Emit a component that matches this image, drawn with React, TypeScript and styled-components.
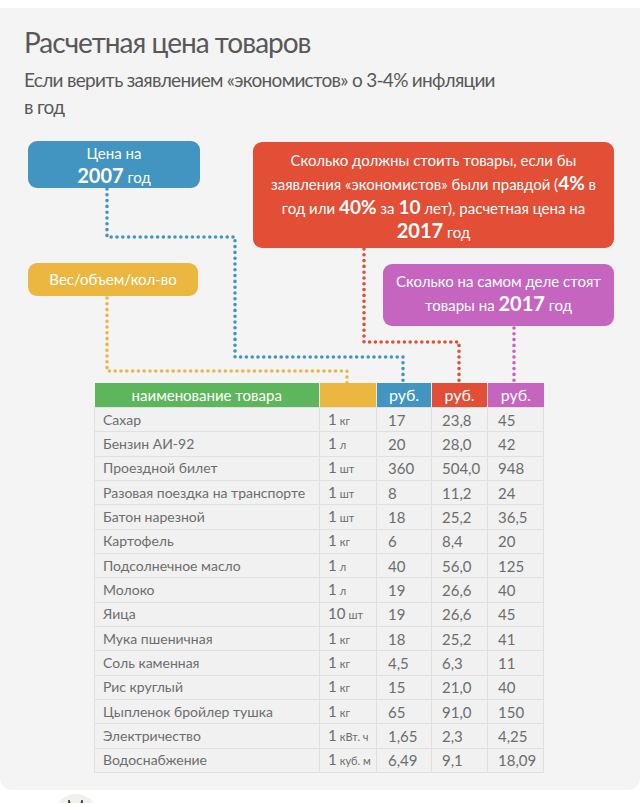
import styled, { createGlobalStyle } from 'styled-components';

const GlobalStyle = createGlobalStyle`
  html, body {
    margin: 0;
    padding: 0;
    background: #ffffff;
  }
  body {
    font-family: Lato, 'Open Sans', 'Liberation Sans', sans-serif;
    overflow: hidden;
  }
`;

const Card = styled.section`
  position: relative;
  margin-top: 8px;
  height: 782px;
  background: #f4f4f4;
  border-radius: 0 0 12px 12px;
  padding: 16px 0 0 0;
  box-sizing: border-box;
`;

const Title = styled.h1`
  margin: 0 0 6px 24px;
  font-size: 28px;
  line-height: 36px;
  font-weight: 400;
  letter-spacing: -1px;
  color: #585858;
`;

const Subtitle = styled.h2`
  margin: 0 0 21px 24px;
  font-size: 19px;
  line-height: 27px;
  font-weight: 400;
  letter-spacing: -0.7px;
  color: #585858;
  white-space: nowrap;
`;

const Row = styled.div<{ $top?: number }>`
  display: flex;
  justify-content: space-between;
  align-items: flex-start;
  padding: 0 26px 0 28px;
  margin-top: ${(p) => p.$top ?? 0}px;
`;

const Callout = styled.div<{ $bg: string; $w: number; $h: number; $lh?: number; $pt?: number; $mt?: number }>`
  position: relative;
  z-index: 1;
  box-sizing: border-box;
  width: ${(p) => p.$w}px;
  height: ${(p) => p.$h}px;
  margin-top: ${(p) => p.$mt ?? 0}px;
  padding: ${(p) => p.$pt ?? 0}px 8px 0;
  background: ${(p) => p.$bg};
  border-radius: 9px;
  color: #ffffff;
  font-size: 15px;
  line-height: ${(p) => p.$lh ?? 24}px;
  text-align: center;
  white-space: nowrap;
`;

const Big = styled.b<{ $size?: number }>`
  font-size: ${(p) => p.$size ?? 20}px;
  font-weight: 700;
  line-height: 1;
`;

const Connectors = styled.svg`
  position: absolute;
  left: 0;
  top: 0;
  z-index: 0;
  pointer-events: none;
`;

const Table = styled.table`
  margin: 57px 0 0 94px;
  width: 449px;
  border-collapse: collapse;
  table-layout: fixed;
  position: relative;
  z-index: 1;
`;

const HeadCell = styled.th<{ $bg: string }>`
  height: 24px;
  padding: 0;
  background: ${(p) => p.$bg};
  color: #ffffff;
  font-weight: 400;
  font-size: 15px;
  line-height: 24px;
  text-align: center;
  border-left: 1px solid #e9e9e9;
  &:first-child {
    border-left: none;
  }
`;

const Rub = styled.span`
  font-size: 16px;
`;

const BodyRow = styled.tr`
  height: 24.33px;
`;

const Cell = styled.td<{ $pl?: number }>`
  padding: 0 0 0 ${(p) => p.$pl ?? 11}px;
  background: #f1f1f1;
  border: 1px solid #e0e0e0;
  color: #6d6d6d;
  font-size: 15px;
  line-height: 20px;
  white-space: nowrap;
  overflow: hidden;
`;

const Name = styled(Cell)`
  font-size: 14px;
  padding-left: 8px;
`;

const Unit = styled.small`
  font-size: 11px;
  margin-left: 3px;
`;

const Footer = styled.div`
  padding: 4px 0 0 53px;
`;

const Avatar = styled.div`
  width: 46px;
  height: 46px;
  border-radius: 50%;
  background: #eff1ea;
  display: flex;
  justify-content: center;
  padding-top: 5px;
  box-sizing: border-box;
`;

const BLUE = '#4195c0';
const YELLOW = '#ebb740';
const RED = '#e24e36';
const PURPLE = '#c565c0';
const GREEN = '#5db65b';

type Item = [string, string, string, string, string, string];

const items: Item[] = [
  ['Сахар', '1', 'кг', '17', '23,8', '45'],
  ['Бензин АИ-92', '1', 'л', '20', '28,0', '42'],
  ['Проездной билет', '1', 'шт', '360', '504,0', '948'],
  ['Разовая поездка на транспорте', '1', 'шт', '8', '11,2', '24'],
  ['Батон нарезной', '1', 'шт', '18', '25,2', '36,5'],
  ['Картофель', '1', 'кг', '6', '8,4', '20'],
  ['Подсолнечное масло', '1', 'л', '40', '56,0', '125'],
  ['Молоко', '1', 'л', '19', '26,6', '40'],
  ['Яица', '10', 'шт', '19', '26,6', '45'],
  ['Мука пшеничная', '1', 'кг', '18', '25,2', '41'],
  ['Соль каменная', '1', 'кг', '4,5', '6,3', '11'],
  ['Рис круглый', '1', 'кг', '15', '21,0', '40'],
  ['Цыпленок бройлер тушка', '1', 'кг', '65', '91,0', '150'],
  ['Электричество', '1', 'кВт. ч', '1,65', '2,3', '4,25'],
  ['Водоснабжение', '1', 'куб. м', '6,49', '9,1', '18,09'],
];

// connector paths in page coordinates, shifted by the card's 8px offset
const lines: [string, string][] = [
  [BLUE, 'M107 189 V237 H235 V357 H403 V383'],
  [YELLOW, 'M107 298 V371 H347 V383'],
  [RED, 'M364 249 V342 H459 V383'],
  [PURPLE, 'M514 328 V383'],
];

function App() {
  return (
    <>
      <GlobalStyle />
      <Card>
        <Connectors width={640} height={400}>
          <g transform="translate(0,-8)">
            {lines.map(([color, d]) => (
              <path
                key={d}
                d={d}
                fill="none"
                stroke={color}
                strokeWidth={3.6}
                strokeLinecap="round"
                strokeDasharray="0 5.8"
              />
            ))}
          </g>
        </Connectors>

        <Title>Расчетная цена товаров</Title>
        <Subtitle>
          Если верить заявлением «экономистов» о 3-4% инфляции
          <br />в год
        </Subtitle>

        <Row>
          <Callout $bg={BLUE} $w={172} $h={47}>
            Цена на
            <br />
            <Big>2007</Big> год
          </Callout>
          <Callout $bg={RED} $w={361} $h={106} $pt={6} $mt={1}>
            Сколько должны стоить товары, если бы
            <br />
            заявления «экономистов» были правдой (<Big $size={19}>4%</Big> в
            <br />
            год или <Big $size={19}>40%</Big> за <Big $size={19}>10</Big> лет), расчетная цена на
            <br />
            <Big>2017</Big> год
          </Callout>
        </Row>

        <Row $top={15}>
          <Callout $bg={YELLOW} $w={170} $h={33} $lh={33}>
            Вес/объем/кол-во
          </Callout>
          <Callout $bg={PURPLE} $w={231} $h={62} $pt={5} $mt={1}>
            Сколько на самом деле стоят
            <br />
            товары на <Big>2017</Big> год
          </Callout>
        </Row>

        <Table>
          <colgroup>
            <col style={{ width: 225 }} />
            <col style={{ width: 57 }} />
            <col style={{ width: 55 }} />
            <col style={{ width: 56 }} />
            <col style={{ width: 56 }} />
          </colgroup>
          <thead>
            <tr>
              <HeadCell $bg={GREEN}>наименование товара</HeadCell>
              <HeadCell $bg={YELLOW} />
              <HeadCell $bg={BLUE}>
                <Rub>руб.</Rub>
              </HeadCell>
              <HeadCell $bg={RED}>
                <Rub>руб.</Rub>
              </HeadCell>
              <HeadCell $bg={PURPLE}>
                <Rub>руб.</Rub>
              </HeadCell>
            </tr>
          </thead>
          <tbody>
            {items.map(([name, qty, unit, p2007, calc, real]) => (
              <BodyRow key={name}>
                <Name>{name}</Name>
                <Cell $pl={8}>
                  {qty}
                  <Unit>{unit}</Unit>
                </Cell>
                <Cell>{p2007}</Cell>
                <Cell $pl={10}>{calc}</Cell>
                <Cell $pl={10}>{real}</Cell>
              </BodyRow>
            ))}
          </tbody>
        </Table>
      </Card>
      <Footer>
        <Avatar>
          <svg width="24" height="10" viewBox="0 0 24 10">
            <path d="M5 2 L6 8" stroke="#3a3a3a" strokeWidth="2" strokeLinecap="round" />
            <path d="M18 2 L17 8" stroke="#3a3a3a" strokeWidth="2" strokeLinecap="round" />
          </svg>
        </Avatar>
      </Footer>
    </>
  );
}

export default App;
